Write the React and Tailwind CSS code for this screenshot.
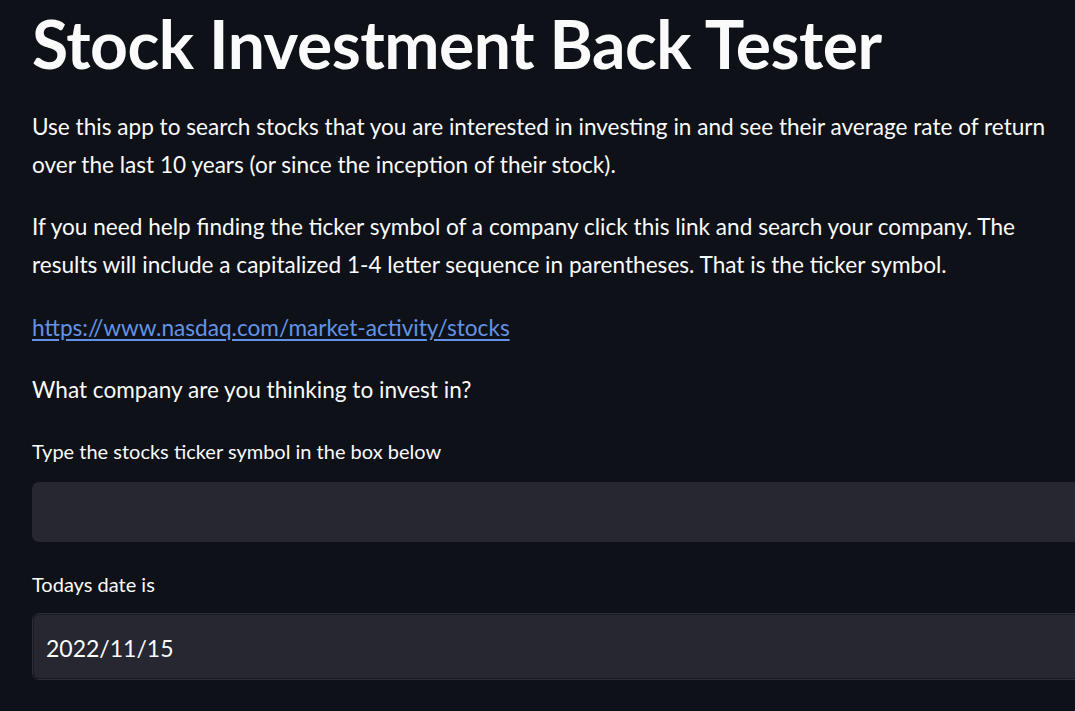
import React from 'react';

export default function App() {
  const font = { fontFamily: 'Lato, "Noto Sans", sans-serif' };

  return (
    <div className="w-[1075px] h-[711px] overflow-hidden bg-[#0e1117] text-[#fafafa]" style={font}>
      <div className="w-[1100px] pl-[32px] pt-[4px]">
        {/* Title */}
        <h1 className="text-[66px] leading-[80px] font-bold tracking-[-0.5px] text-[#fafafa]">
          Stock Investment Back Tester
        </h1>

        <div className="mt-[24px] w-[1050px] text-[22.6px] leading-[38px] text-[#fafafa]">
          <p>
            Use this app to search stocks that you are interested in investing in and see their average rate of return
            over the last 10 years (or since the inception of their stock).
          </p>
          <p className="mt-[24px]">
            If you need help finding the ticker symbol of a company click this link and search your company. The
            results will include a capitalized 1-4 letter sequence in parentheses. That is the ticker symbol.
          </p>
          <p className="mt-[25px]">
            <a href="#" className="text-[#6393e6] underline underline-offset-[3px]">
              https://www.nasdaq.com/market-activity/stocks
            </a>
          </p>
          <p className="mt-[24px]">What company are you thinking to invest in?</p>
        </div>

        {/* Ticker input */}
        <div className="mt-[27px]">
          <label className="block text-[20px] leading-[30px] text-[#fafafa]">
            Type the stocks ticker symbol in the box below
          </label>
          <div className="mt-[16px] h-[60px] rounded-[7px] bg-[#262730]" />
        </div>

        {/* Date */}
        <div className="mt-[27px]">
          <label className="block text-[20px] leading-[30px] text-[#fafafa]">Todays date is</label>
          <div className="mt-[14px] rounded-[7px] border border-[#2c2d37]">
            <div className="h-[65px] rounded-[6px] border border-[#181a21] bg-[#262730] flex items-center pl-[12px] pt-[3px] text-[23px]">
              2022/11/15
            </div>
          </div>
        </div>
      </div>
    </div>
  );
}
